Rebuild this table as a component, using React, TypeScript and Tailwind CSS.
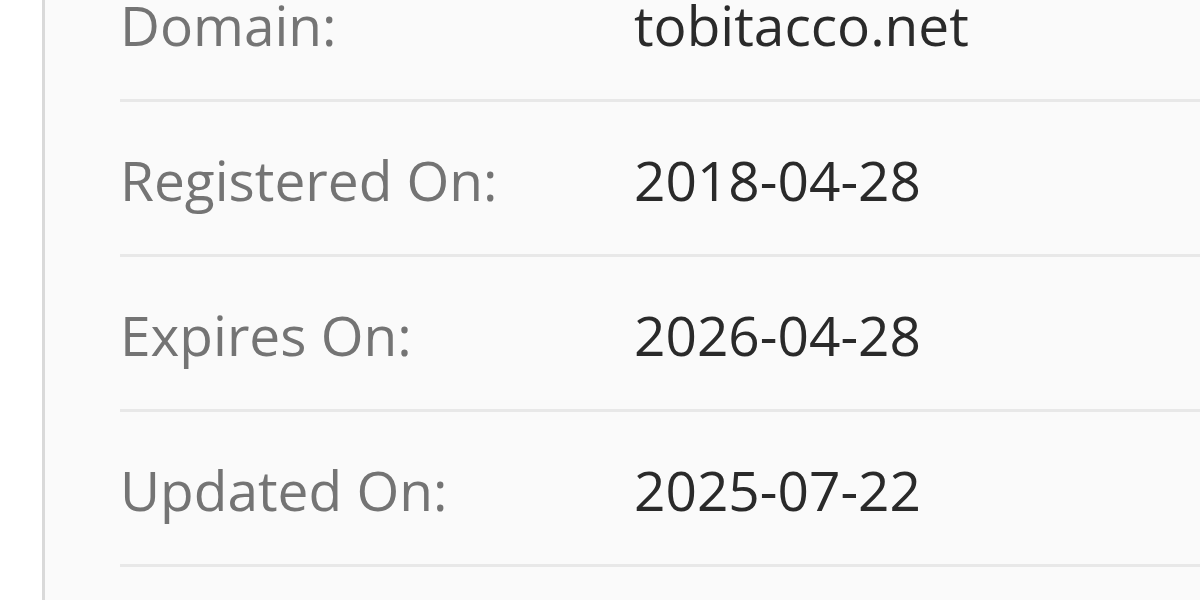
import React from "react";

const rows = [
  ["Domain:", "tobitacco.net"],
  ["Registered On:", "2018-04-28"],
  ["Expires On:", "2026-04-28"],
  ["Updated On:", "2025-07-22"],
];

export default function App() {
  return (
    <div
      className="w-[1200px] h-[600px] overflow-hidden bg-white flex"
      style={{ fontFamily: '"Open Sans", "Noto Sans", sans-serif' }}
    >
      <div className="w-[42px] shrink-0" />
      <div className="flex-1 border-l-[3px] border-[#d9d9d9] bg-[#fafafa] pl-[75px]">
        <div className="mt-[-53px]">
          {rows.map(([k, v]) => (
            <div
              key={k}
              className="flex h-[155px] border-b-[3px] border-[#e8e8e8] pt-[41px] text-[55px] leading-[74px]"
            >
              <div className="w-[514px] shrink-0 text-[#747474]">{k}</div>
              <div className="text-[#2a2a2a] whitespace-nowrap">{v}</div>
            </div>
          ))}
        </div>
      </div>
    </div>
  );
}
